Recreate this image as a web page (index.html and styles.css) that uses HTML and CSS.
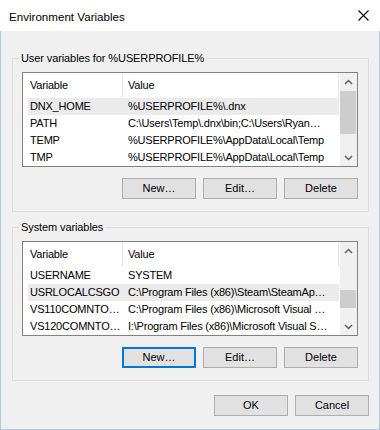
FILE: index.html
```html
<!DOCTYPE html>
<html>
<head>
<meta charset="utf-8">
<link rel="stylesheet" href="styles.css">
</head>
<body>
<div class="window">
  <div class="titlebar">
    <span class="title">Environment Variables</span>
    <svg class="close" width="11" height="11" viewBox="0 0 11 11"><path d="M0.5 0.5L10.5 10.5M10.5 0.5L0.5 10.5" stroke="#000" stroke-width="1.1" fill="none"/></svg>
  </div>
  <div class="frame">
    <fieldset class="group">
      <legend>User variables for %USERPROFILE%</legend>
      <div class="list">
        <div class="list-main">
          <div class="list-head"><div class="hc var">Variable</div><div class="hc val">Value</div></div>
          <div class="row sel"><div class="c1">DNX_HOME</div><div class="c2">%USERPROFILE%\.dnx</div></div>
          <div class="row"><div class="c1">PATH</div><div class="c2">C:\Users\Temp\.dnx\bin;C:\Users\Ryan…</div></div>
          <div class="row"><div class="c1">TEMP</div><div class="c2">%USERPROFILE%\AppData\Local\Temp</div></div>
          <div class="row"><div class="c1">TMP</div><div class="c2">%USERPROFILE%\AppData\Local\Temp</div></div>
        </div>
        <div class="scrollbar">
          <div class="sb-btn"><svg width="9" height="6" viewBox="0 0 9 6"><path d="M1 5L4.5 1.5L8 5" stroke="#606060" stroke-width="1.5" fill="none"/></svg></div>
          <div class="sb-track"><div class="thumb" style="margin-top:1px;height:43px"></div></div>
          <div class="sb-btn"><svg width="9" height="6" viewBox="0 0 9 6"><path d="M1 1L4.5 4.5L8 1" stroke="#606060" stroke-width="1.5" fill="none"/></svg></div>
        </div>
      </div>
      <div class="btns">
        <button class="btn">New…</button>
        <button class="btn">Edit…</button>
        <button class="btn">Delete</button>
      </div>
    </fieldset>

    <fieldset class="group sys">
      <legend>System variables</legend>
      <div class="list">
        <div class="list-main">
          <div class="list-head"><div class="hc var">Variable</div><div class="hc val">Value</div></div>
          <div class="row"><div class="c1">USERNAME</div><div class="c2">SYSTEM</div></div>
          <div class="row sel"><div class="c1">USRLOCALCSGO</div><div class="c2">C:\Program Files (x86)\Steam\SteamAp…</div></div>
          <div class="row"><div class="c1">VS110COMNTO…</div><div class="c2">C:\Program Files (x86)\Microsoft Visual …</div></div>
          <div class="row"><div class="c1">VS120COMNTO…</div><div class="c2">I:\Program Files (x86)\Microsoft Visual S…</div></div>
        </div>
        <div class="scrollbar">
          <div class="sb-btn"><svg width="9" height="6" viewBox="0 0 9 6"><path d="M1 5L4.5 1.5L8 5" stroke="#606060" stroke-width="1.5" fill="none"/></svg></div>
          <div class="sb-track"><div class="thumb" style="margin-top:31px;height:18px"></div></div>
          <div class="sb-btn"><svg width="9" height="6" viewBox="0 0 9 6"><path d="M1 1L4.5 4.5L8 1" stroke="#606060" stroke-width="1.5" fill="none"/></svg></div>
        </div>
      </div>
      <div class="btns">
        <button class="btn focus">New…</button>
        <button class="btn">Edit…</button>
        <button class="btn">Delete</button>
      </div>
    </fieldset>

    <div class="footer">
      <button class="btn">OK</button>
      <button class="btn">Cancel</button>
    </div>
  </div>
</div>
</body>
</html>
```

FILE: styles.css
```css
html, body {
  margin: 0;
  padding: 0;
}
body {
  font-family: "Liberation Sans", Arial, sans-serif;
  font-size: 11px;
  color: #000;
  background: #f0f0f0;
}
.window {
  width: 380px;
  height: 430px;
  display: flex;
  flex-direction: column;
}
.titlebar {
  height: 31px;
  background: #fff;
  display: flex;
  align-items: center;
  justify-content: space-between;
  padding: 0 11px 0 9px;
  box-sizing: border-box;
  flex: none;
}
.title {
  font-size: 11.6px;
  line-height: 15px;
  padding-top: 1px;
}
.close {
  display: block;
  margin-top: -1px;
}
.frame {
  flex: 1;
  background: #f0f0f0;
  border: 1px solid #aacbeb;
  border-top: none;
  padding-top: 20px;
  box-sizing: border-box;
}
.group {
  margin: 0 0 0 11px;
  width: 357px;
  box-sizing: border-box;
  border: 1px solid #dcdcdc;
  padding: 7px 10px 12px 9px;
  min-width: 0;
}
.group.sys {
  margin-top: 8px;
}
.group legend {
  font-size: 11px;
  line-height: 14px;
  padding: 0 2px;
  margin-left: -3px;
  letter-spacing: -0.1px;
}
.list {
  height: 95px;
  box-sizing: border-box;
  border: 1px solid #828282;
  background: #fff;
  display: flex;
  letter-spacing: -0.2px;
}
.list-main {
  flex: 1;
  min-width: 0;
}
.list-head {
  height: 25px;
  display: flex;
}
.hc {
  line-height: 25px;
  border-right: 1px solid #e5e5e5;
  white-space: nowrap;
  flex: none;
}
.hc.var {
  width: 92px;
  padding-left: 7px;
}
.hc.val {
  width: 210px;
  padding-left: 5px;
}
.row {
  height: 17px;
  line-height: 17px;
  display: flex;
  margin-left: 5px;
  width: 311px;
  white-space: nowrap;
}
.row.sel {
  background: #ebebeb;
}
.c1 {
  flex: none;
  width: 93px;
  padding-left: 2px;
  overflow: hidden;
}
.c2 {
  flex: 1;
  min-width: 0;
  padding-left: 5px;
  overflow: hidden;
}
.scrollbar {
  width: 17px;
  background: #f0f0f0;
  display: flex;
  flex-direction: column;
  flex: none;
}
.sb-btn {
  height: 17px;
  display: flex;
  align-items: center;
  justify-content: center;
  flex: none;
}
.sb-btn svg {
  display: block;
}
.sb-track {
  flex: 1;
}
.thumb {
  background: #cdcdcd;
  margin-right: 1px;
}
.btns {
  display: flex;
  justify-content: flex-end;
  gap: 7px;
  margin-top: 11px;
}
.btn {
  width: 74px;
  height: 21px;
  box-sizing: border-box;
  border: 1px solid #adadad;
  background: #e1e1e1;
  font-family: "Liberation Sans", Arial, sans-serif;
  font-size: 11px;
  color: #000;
  padding: 0;
  margin: 0;
  line-height: 19px;
}
.btn.focus {
  border: 2px solid #0078d7;
  line-height: 17px;
}
.footer {
  display: flex;
  justify-content: flex-end;
  gap: 7px;
  margin: 14px 10px 0 0;
}
```
